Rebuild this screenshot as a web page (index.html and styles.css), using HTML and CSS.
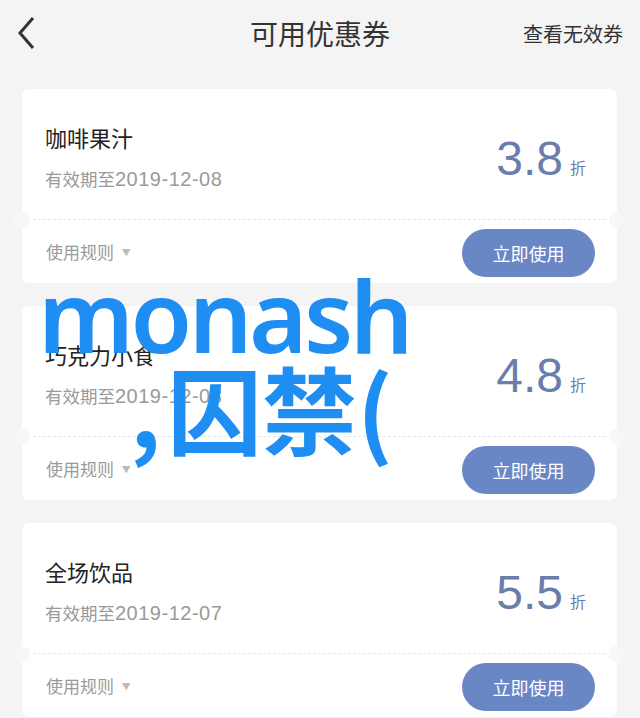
FILE: index.html
```html
<!DOCTYPE html>
<html>
<head>
  <title>可用优惠券</title>
  <link rel="stylesheet" href="styles.css">
</head>
<body>

  <div class="top-bar">
    <svg class="back" width="20" height="34" viewBox="0 0 20 34">
      <path d="M16 2 L3 17 L16 32" fill="none" stroke="#333" stroke-width="3"/>
    </svg>
    <h1>可用优惠券</h1>
    <a href="#">查看无效券</a>
  </div>

  <div class="list">
    <div class="coupon">
      <div class="coupon-main">
        <div class="info">
          <div class="name">咖啡果汁</div>
          <div class="date">有效期至<span>2019-12-08</span></div>
        </div>
        <div class="rate"><span class="num">3.8</span><span class="unit">折</span></div>
      </div>
      <div class="coupon-foot">
        <span class="rules">使用规则 <i>▼</i></span>
        <button>立即使用</button>
      </div>
    </div>

    <div class="coupon">
      <div class="coupon-main">
        <div class="info">
          <div class="name">巧克力小食</div>
          <div class="date">有效期至<span>2019-12-08</span></div>
        </div>
        <div class="rate"><span class="num">4.8</span><span class="unit">折</span></div>
      </div>
      <div class="coupon-foot">
        <span class="rules">使用规则 <i>▼</i></span>
        <button>立即使用</button>
      </div>
    </div>

    <div class="coupon">
      <div class="coupon-main">
        <div class="info">
          <div class="name">全场饮品</div>
          <div class="date">有效期至<span>2019-12-07</span></div>
        </div>
        <div class="rate"><span class="num">5.5</span><span class="unit">折</span></div>
      </div>
      <div class="coupon-foot">
        <span class="rules">使用规则 <i>▼</i></span>
        <button>立即使用</button>
      </div>
    </div>
  </div>

  <div class="watermark">
    <div class="wm-1">monash</div>
    <div class="wm-2"><span class="comma">,</span>囚禁(</div>
  </div>

</body>
</html>
```

FILE: styles.css
```css
body {
  margin: 0;
  height: 718px;
  overflow: hidden;
  background: #f4f4f4;
  font-family: "Noto Sans CJK SC", "Noto Sans", sans-serif;
  position: relative;
}

.top-bar {
  height: 66px;
  display: flex;
  align-items: center;
  justify-content: space-between;
  padding: 0 17px;
  position: relative;
}
.top-bar .back { margin-top: -1px; }
.top-bar h1 {
  position: absolute;
  left: 0;
  right: 0;
  margin: 0;
  text-align: center;
  font-size: 28px;
  font-weight: normal;
  color: #333;
  pointer-events: none;
}
.top-bar a {
  font-size: 20px;
  color: #333;
  text-decoration: none;
}

.list {
  padding: 23px 23px 0 22px;
  display: flex;
  flex-direction: column;
  gap: 23px;
}

.coupon {
  background: #fff;
  border-radius: 7px;
  height: 194px;
  position: relative;
}
.coupon::before,
.coupon::after {
  content: "";
  position: absolute;
  top: 123px;
  width: 16px;
  height: 16px;
  border-radius: 50%;
  background: #f7f7f7;
}
.coupon::before { left: -8px; }
.coupon::after { right: -8px; }

.coupon-main {
  height: 131px;
  display: flex;
  justify-content: space-between;
  align-items: center;
  box-sizing: border-box;
  border-bottom: 1px dashed #e6e6e6;
  margin: 0 11px;
  padding: 0 20px 0 12px;
}
.info { padding-top: 6px; }
.name {
  font-size: 22px;
  color: #222;
  line-height: 30px;
}
.date {
  font-size: 17.5px;
  color: #9a9a9a;
  line-height: 26px;
  margin-top: 14px;
}
.date span {
  font-family: "Liberation Sans", sans-serif;
  font-size: 20px;
  letter-spacing: 0.5px;
}

.rate {
  color: #6a7dab;
  display: flex;
  align-items: flex-end;
  margin-top: 10px;
}
.num {
  font-family: "Liberation Sans", sans-serif;
  font-size: 48px;
  line-height: 1;
}
.unit {
  font-size: 16px;
  line-height: 16px;
  margin: 0 0 8px 7px;
}

.coupon-foot {
  height: 63px;
  display: flex;
  justify-content: space-between;
  align-items: center;
  padding: 0 22px 0 24px;
}
.rules {
  font-size: 17px;
  color: #9a9a9a;
}
.rules i {
  font-style: normal;
  font-size: 9px;
  color: #bbb;
  margin-left: 4px;
  vertical-align: 3px;
}
.coupon-foot button {
  width: 133px;
  height: 48px;
  border: none;
  border-radius: 24px;
  background: #6a87c5;
  color: #fff;
  font-family: "Noto Sans CJK SC", sans-serif;
  font-size: 18px;
  margin-top: 3px;
}

.watermark {
  position: absolute;
  left: 38px;
  top: 254px;
  color: #1f8ef3;
  font-family: "Noto Sans", "Noto Sans CJK SC", sans-serif;
  pointer-events: none;
}
.wm-1 {
  font-size: 100px;
  font-weight: 600;
  line-height: 120px;
  letter-spacing: -3.5px;
}
.wm-2 {
  font-family: "Noto Sans CJK SC", sans-serif;
  font-size: 95px;
  font-weight: 700;
  line-height: 95px;
  margin-left: 92px;
  margin-top: -15px;
}
.wm-2 .comma { margin-right: 6px; }
```
